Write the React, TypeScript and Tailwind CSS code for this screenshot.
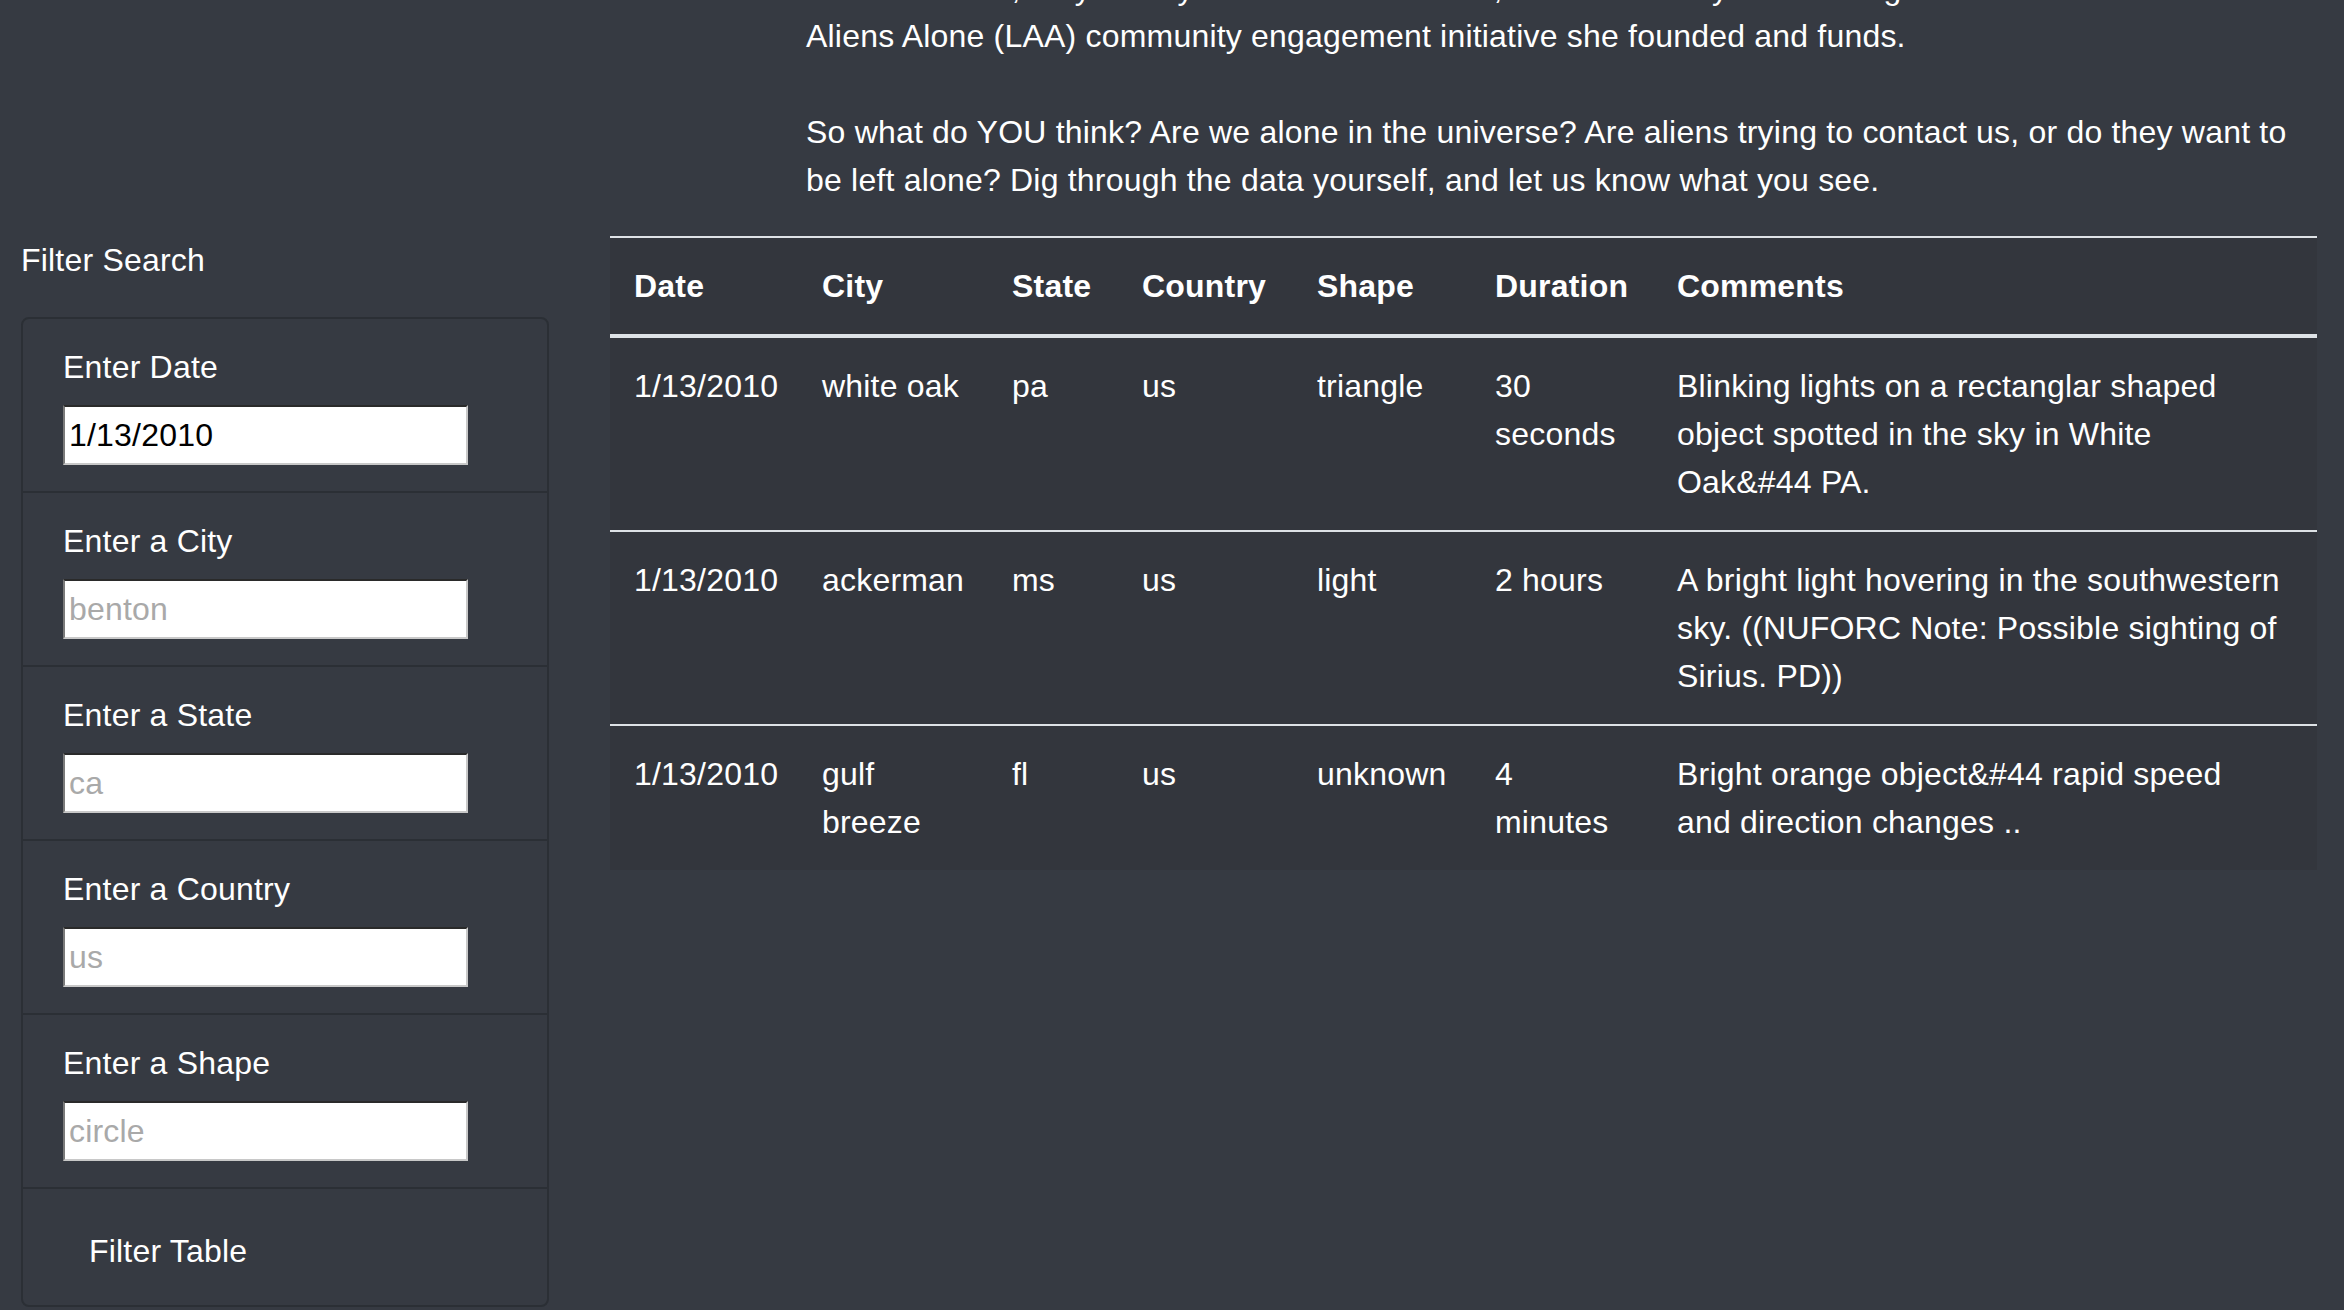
import React from "react";

const rows = [
  {
    date: "1/13/2010",
    city: ["white oak"],
    state: "pa",
    country: "us",
    shape: "triangle",
    duration: ["30", "seconds"],
    comments: ["Blinking lights on a rectanglar shaped", "object spotted in the sky in White", "Oak&#44 PA."],
  },
  {
    date: "1/13/2010",
    city: ["ackerman"],
    state: "ms",
    country: "us",
    shape: "light",
    duration: ["2 hours"],
    comments: ["A bright light hovering in the southwestern", "sky. ((NUFORC Note: Possible sighting of", "Sirius. PD))"],
  },
  {
    date: "1/13/2010",
    city: ["gulf", "breeze"],
    state: "fl",
    country: "us",
    shape: "unknown",
    duration: ["4", "minutes"],
    comments: ["Bright orange object&#44 rapid speed", "and direction changes .."],
  },
];

function Lines({ items }: { items: string[] }) {
  return (
    <>
      {items.map((t, i) => (
        <div key={i} className="whitespace-nowrap">
          {t}
        </div>
      ))}
    </>
  );
}

const fields = [
  { label: "Enter Date", value: "1/13/2010", placeholder: "" },
  { label: "Enter a City", value: "", placeholder: "benton" },
  { label: "Enter a State", value: "", placeholder: "ca" },
  { label: "Enter a Country", value: "", placeholder: "us" },
  { label: "Enter a Shape", value: "", placeholder: "circle" },
];

export default function App() {
  const th = "text-left font-bold px-[24px] py-[24px] border-t-2 border-b-4 border-[#dee2e6] align-bottom";
  const td = "px-[24px] py-[24px] align-top";
  return (
    <div className="h-[1310px] w-full overflow-hidden bg-[#363a42] text-white font-['Liberation_Sans',Arial,sans-serif] text-[32px] leading-[48px] tracking-[0.2px]">
      <div className="mt-[-36px] pl-[806px]">
        <p className="whitespace-nowrap">
          Dana believes, they clearly want to be left alone, and that is why she is a big fan of the Leave
          <br />
          Aliens Alone (LAA) community engagement initiative she founded and funds.
          <br />
          <br />
          So what do YOU think? Are we alone in the universe? Are aliens trying to contact us, or do they want to
          <br />
          be left alone? Dig through the data yourself, and let us know what you see.
        </p>
      </div>

      <div className="flex mt-[32px]">
        <aside className="w-[549px] shrink-0 pl-[21px]">
          <div className="mb-[33px]">Filter Search</div>
          <div className="w-[528px] border-2 border-[#2b2f35] rounded-[8px] overflow-hidden">
            {fields.map((f, i) => (
              <div
                key={f.label}
                className={`px-[40px] pt-[24px] pb-[26px] ${i > 0 ? "border-t-2 border-[#2b2f35]" : ""}`}
              >
                <label className="block mb-[14px]">{f.label}</label>
                <input
                  type="text"
                  defaultValue={f.value}
                  placeholder={f.placeholder}
                  className="block w-[405px] h-[60px] bg-white text-black pl-[4px] text-[32px] font-['Liberation_Sans',Arial,sans-serif] placeholder-[#a9a9a9] border-2 border-t-[#2a2a2a] border-l-[#7a7a7a] border-r-[#c8c8c8] border-b-[#c8c8c8] outline-none"
                />
              </div>
            ))}
            <div className="px-[40px] pt-[24px] pb-[16px] border-t-2 border-[#2b2f35]">
              <button className="border-2 border-transparent px-[24px] py-[12px] text-white text-[32px] leading-[48px] bg-transparent">
                Filter Table
              </button>
            </div>
          </div>
        </aside>

        <div className="ml-[61px] w-[1707px] shrink-0">
          <table className="w-[1707px] table-fixed border-separate border-spacing-0 bg-[#33363d]">
            <colgroup>
              <col className="w-[188px]" />
              <col className="w-[190px]" />
              <col className="w-[130px]" />
              <col className="w-[175px]" />
              <col className="w-[178px]" />
              <col className="w-[182px]" />
              <col className="w-[664px]" />
            </colgroup>
            <thead>
              <tr>
                <th className={th}>Date</th>
                <th className={th}>City</th>
                <th className={th}>State</th>
                <th className={th}>Country</th>
                <th className={th}>Shape</th>
                <th className={th}>Duration</th>
                <th className={th}>Comments</th>
              </tr>
            </thead>
            <tbody>
              {rows.map((r, i) => {
                const b = i > 0 ? " border-t-2 border-[#dee2e6]" : "";
                return (
                  <tr key={i}>
                    <td className={td + b}>{r.date}</td>
                    <td className={td + b}>
                      <Lines items={r.city} />
                    </td>
                    <td className={td + b}>{r.state}</td>
                    <td className={td + b}>{r.country}</td>
                    <td className={td + b}>{r.shape}</td>
                    <td className={td + b}>
                      <Lines items={r.duration} />
                    </td>
                    <td className={td + b}>
                      <Lines items={r.comments} />
                    </td>
                  </tr>
                );
              })}
            </tbody>
          </table>
        </div>
      </div>
    </div>
  );
}
